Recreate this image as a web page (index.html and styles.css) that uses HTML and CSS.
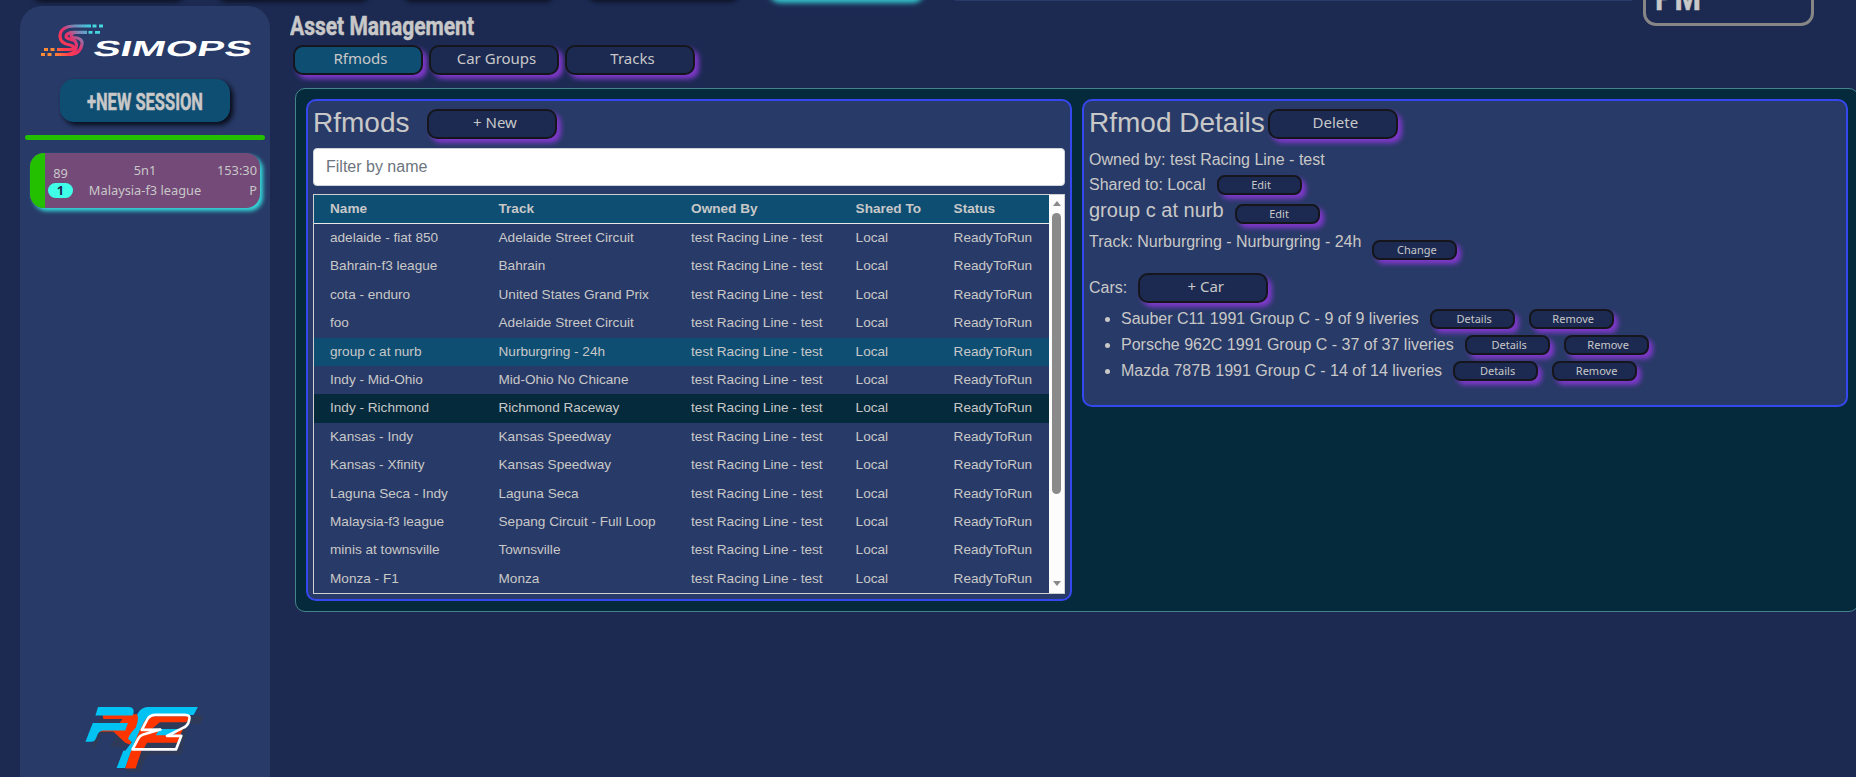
FILE: index.html
```
<!DOCTYPE html>
<html lang="en">
<head>
    <meta charset="UTF-8">
    <meta name="viewport" content="width=device-width, initial-scale=1.0">
    <title>SimOps - Asset Management</title>
    <link rel="stylesheet" href="styles.css">
</head>
<body>

    <!-- Top navigation, scrolled almost out of view -->
    <header class="topbar">
        <nav class="topnav">
            <span class="topnav-item"></span>
            <span class="topnav-item"></span>
            <span class="topnav-item"></span>
            <span class="topnav-item"></span>
            <span class="topnav-item active"></span>
        </nav>
        <div class="topline"></div>
        <div class="clock">
            <svg width="60" height="38" viewBox="0 0 60 38"><text class="condensed" x="0" y="27" font-size="38" textLength="46" lengthAdjust="spacingAndGlyphs">PM</text></svg>
        </div>
    </header>

    <div class="page">
        <!-- Sidebar -->
        <aside class="sidebar">
            <svg class="logo" width="222" height="42" viewBox="0 0 222 42">
                <defs>
                    <linearGradient id="simopsGrad" x1="50" y1="2" x2="14" y2="32" gradientUnits="userSpaceOnUse">
                        <stop offset="0" stop-color="#35d4e0"/>
                        <stop offset="0.28" stop-color="#7a86b8"/>
                        <stop offset="0.5" stop-color="#e8306c"/>
                        <stop offset="0.75" stop-color="#ff3b4e"/>
                        <stop offset="1" stop-color="#ff8a35"/>
                    </linearGradient>
                </defs>
                <g fill="none" stroke="url(#simopsGrad)" stroke-width="3.200">
                    <path d="M51 3H35C25 3 20 7 20 13C20 19 24 21 30 22C35 23 34 26.500 30 26.500H17"/>
                    <path d="M47 9.300H35C29 9.300 26 11 26 13.500C26 16.500 32 15.500 35 18C38 22 36 31.500 27 31.500H15"/>
                    <path d="M35 9.300C30 10 30 14 34 14.500C40 15 42.500 17 42 21C41 27 37 31.500 29 31.500"/>
                </g>
                <g stroke="#45d5df" stroke-width="2.800">
                    <path d="M52.500 3h4M59 3h4M48.500 9.300h4M55 9.300h5M61 1.500"/>
                </g>
                <g stroke="#ff8a35" stroke-width="2.800">
                    <path d="M4 26.500h4M10.500 26.500h4M1 31.500h4M7.500 31.500h4"/>
                </g>
                <text class="wordmark" transform="translate(52 33) skewX(-14)" x="0" y="0" font-size="22" textLength="158" lengthAdjust="spacingAndGlyphs">SIMOPS</text>
            </svg>

            <button class="new-session">
                <svg width="120" height="36" viewBox="0 0 120 36"><text class="condensed" x="1" y="24" font-size="24" textLength="116" lengthAdjust="spacingAndGlyphs">+NEW SESSION</text></svg>
            </button>

            <div class="divider"></div>

            <div class="session">
                <div class="session-state"></div>
                <div class="session-count">
                    <span>89</span>
                    <span class="pill">1</span>
                </div>
                <div class="session-name">
                    <span>5n1</span>
                    <span>Malaysia-f3 league</span>
                </div>
                <div class="session-time">
                    <span>153:30</span>
                    <span>P</span>
                </div>
            </div>

            <svg class="rf2" width="123" height="68" viewBox="60 75 370 205">
                <g fill="#2f3a58">
                    <path d="M120 110H225L200 205H150L175 165H125L105 208H95Z"/>
                    <path d="M240 110H436L420 135H385L365 228H262L240 285H195Z"/>
                </g>
                <path fill="#ff3500" d="M128 106H232L236 112L212 198L196 192L160 158H118L124 146H168L188 120H130Z"/>
                <path fill="#ff3500" d="M236 112L258 130L274 112H392L380 130H300L276 150H370L352 192H262L250 212H244L227 269H197L222 190L205 178Z"/>
                <path fill="#00c3f3" d="M114 84H208Q224 86 221 102L218 110H106Z"/>
                <path fill="#00c3f3" d="M98 132H204L196 155H128Q118 156 114 164L106 182Q103 189 94 189H76Z"/>
                <path fill="#00c3f3" d="M262 84H415L402 108H280Q262 110 254 126L238 158L214 216L196 268H170L190 216H196L216 190L204 180Q212 160 228 146Q238 120 232 106Q242 86 262 84Z"/>
                <path fill="#ff3500" d="M214 216H245L227 269H196Z"/>
                <path fill="#00c3f3" d="M300 150H364L340 169H288Z"/>
                <path fill="none" stroke="#fff" stroke-width="8" stroke-linejoin="round" d="M246 153L262 122Q270 108 288 108H376Q394 108 389 122L386 132Q382 142 370 147L322 171H365L349 212H218L236 178Q240 170 250 167L302 152Z"/>
            </svg>
        </aside>

        <!-- Content -->
        <main class="content">
            <h1 class="page-title">
                <svg width="190" height="34" viewBox="0 0 190 34"><text class="condensed" x="0" y="25" font-size="26" textLength="184" lengthAdjust="spacingAndGlyphs">Asset Management</text></svg>
            </h1>

            <div class="tabs">
                <button class="btn active">Rfmods</button>
                <button class="btn">Car Groups</button>
                <button class="btn">Tracks</button>
            </div>

            <div class="assets">
                <section class="panel panel-list">
                    <div class="panel-head">
                        <h2>Rfmods</h2>
                        <button class="btn">+ New</button>
                    </div>
                    <input class="filter" type="text" placeholder="Filter by name">

                    <div class="table-wrap">
                        <table>
                            <colgroup>
                                <col class="col-name">
                                <col class="col-track">
                                <col class="col-owner">
                                <col class="col-shared">
                                <col class="col-status">
                            </colgroup>
                            <thead>
                                <tr><th>Name</th><th>Track</th><th>Owned By</th><th>Shared To</th><th>Status</th></tr>
                            </thead>
                            <tbody>
                                <tr><td>adelaide - fiat 850</td><td>Adelaide Street Circuit</td><td>test Racing Line - test</td><td>Local</td><td>ReadyToRun</td></tr>
                                <tr><td>Bahrain-f3 league</td><td>Bahrain</td><td>test Racing Line - test</td><td>Local</td><td>ReadyToRun</td></tr>
                                <tr><td>cota - enduro</td><td>United States Grand Prix</td><td>test Racing Line - test</td><td>Local</td><td>ReadyToRun</td></tr>
                                <tr><td>foo</td><td>Adelaide Street Circuit</td><td>test Racing Line - test</td><td>Local</td><td>ReadyToRun</td></tr>
                                <tr class="selected"><td>group c at nurb</td><td>Nurburgring - 24h</td><td>test Racing Line - test</td><td>Local</td><td>ReadyToRun</td></tr>
                                <tr><td>Indy - Mid-Ohio</td><td>Mid-Ohio No Chicane</td><td>test Racing Line - test</td><td>Local</td><td>ReadyToRun</td></tr>
                                <tr class="hover"><td>Indy - Richmond</td><td>Richmond Raceway</td><td>test Racing Line - test</td><td>Local</td><td>ReadyToRun</td></tr>
                                <tr><td>Kansas - Indy</td><td>Kansas Speedway</td><td>test Racing Line - test</td><td>Local</td><td>ReadyToRun</td></tr>
                                <tr><td>Kansas - Xfinity</td><td>Kansas Speedway</td><td>test Racing Line - test</td><td>Local</td><td>ReadyToRun</td></tr>
                                <tr><td>Laguna Seca - Indy</td><td>Laguna Seca</td><td>test Racing Line - test</td><td>Local</td><td>ReadyToRun</td></tr>
                                <tr><td>Malaysia-f3 league</td><td>Sepang Circuit - Full Loop</td><td>test Racing Line - test</td><td>Local</td><td>ReadyToRun</td></tr>
                                <tr><td>minis at townsville</td><td>Townsville</td><td>test Racing Line - test</td><td>Local</td><td>ReadyToRun</td></tr>
                                <tr><td>Monza - F1</td><td>Monza</td><td>test Racing Line - test</td><td>Local</td><td>ReadyToRun</td></tr>
                            </tbody>
                        </table>
                        <div class="scrollbar">
                            <span class="arrow-up"></span>
                            <span class="thumb"></span>
                            <span class="arrow-down"></span>
                        </div>
                    </div>
                </section>

                <section class="panel panel-details">
                    <div class="panel-head">
                        <h2>Rfmod Details</h2>
                        <button class="btn">Delete</button>
                    </div>
                    <div class="line owner">Owned by: test Racing Line - test</div>
                    <div class="line shared">Shared to: Local <button class="btn btn-sm">Edit</button></div>
                    <div class="line name"><span>group c at nurb</span> <button class="btn btn-sm">Edit</button></div>
                    <div class="line track">Track: Nurburgring - Nurburgring - 24h <button class="btn btn-sm">Change</button></div>
                    <div class="line cars">Cars: <button class="btn">+ Car</button></div>
                    <ul class="car-list">
                        <li><span>Sauber C11 1991 Group C - 9 of 9 liveries</span><button class="btn btn-sm">Details</button><button class="btn btn-sm">Remove</button></li>
                        <li><span>Porsche 962C 1991 Group C - 37 of 37 liveries</span><button class="btn btn-sm">Details</button><button class="btn btn-sm">Remove</button></li>
                        <li><span>Mazda 787B 1991 Group C - 14 of 14 liveries</span><button class="btn btn-sm">Details</button><button class="btn btn-sm">Remove</button></li>
                    </ul>
                </section>
            </div>
        </main>
    </div>

</body>
</html>
```
FILE: styles.css
```
* {
    margin: 0;
    padding: 0;
    box-sizing: border-box;
}

body {
    height: 777px;
    overflow: hidden;
    background: #1c2a52;
    color: #c8c8c8;
    font-family: "Liberation Sans", Arial, sans-serif;
    font-size: 16px;
    line-height: 24px;
}

button {
    font-family: "Noto Sans", "Open Sans", sans-serif;
    color: #c8c8c8;
}

.condensed {
    font-family: Roboto, sans-serif;
    font-weight: 700;
    fill: #c8c8c8;
    stroke: #c8c8c8;
    stroke-width: 0.5px;
}

/* top bar */
.topbar {
    display: flex;
    height: 40px;
    margin-top: -40px;
    padding-left: 28px;
}

.topnav {
    display: flex;
    gap: 30px;
    height: 39px;
}

.topnav-item {
    width: 155px;
    border-radius: 12px;
    background: #1c2a52;
    box-shadow: 3px 3px 5px #0c1020;
}

.topnav-item.active {
    background: #0f4e73;
    box-shadow: 1px 3px 5px 1px #35c5cc;
}

.topline {
    width: 677px;
    height: 41px;
    margin-left: 32px;
    border-bottom: 1px solid #283a67;
}

.clock {
    width: 171px;
    height: 66px;
    margin-left: 11px;
    padding: 20px 0 0 9px;
    border: 3px solid #868686;
    border-radius: 13px;
}

.clock svg {
    display: block;
}

.page {
    display: flex;
    gap: 20px;
    height: 777px;
    padding-left: 20px;
}

/* sidebar */
.sidebar {
    display: flex;
    flex-direction: column;
    flex: none;
    width: 250px;
    height: 800px;
    margin-top: 6px;
    padding: 17px 5px 0;
    border-radius: 22px;
    background: #283a67;
}

.logo {
    flex: none;
    margin-left: 15px;
}

.wordmark {
    font-family: "Liberation Sans", Arial, sans-serif;
    font-weight: 700;
    fill: #fff;
}

.new-session {
    flex: none;
    width: 170px;
    height: 43px;
    margin: 14px 0 13px 35px;
    border: none;
    border-radius: 14px;
    background: #0f4e73;
    box-shadow: 3px 3px 5px #080c18;
}

.new-session svg {
    display: block;
    margin: 6px 0 0 26px;
}

.divider {
    height: 5px;
    border-radius: 3px;
    background: #23c000;
}

.session {
    display: flex;
    flex: none;
    width: 230px;
    height: 55px;
    margin: 13px 0 0 5px;
    overflow: hidden;
    border-radius: 14px;
    background: #744a78;
    box-shadow: 3px 3px 4px #35dbdc;
    font-family: "Noto Sans", "Open Sans", sans-serif;
    font-size: 12.8px;
    line-height: 20px;
}

.session-state {
    width: 15px;
    background: #23c000;
}

.session-count,
.session-name,
.session-time {
    display: flex;
    flex-direction: column;
    align-items: center;
}

.session-count {
    width: 31px;
    padding-top: 10px;
}

.pill {
    width: 25px;
    height: 15px;
    border-radius: 8px;
    background: #40ffe8;
    color: #1c2a52;
    font-weight: 700;
    line-height: 15px;
    text-align: center;
}

.session-name {
    flex: 1;
    padding: 7px 0 0 2px;
}

.session-time {
    align-items: flex-end;
    width: 48px;
    padding: 7px 3px 0 0;
}

.rf2 {
    flex: none;
    margin: 496px 0 0 55px;
}

/* content */
.content {
    flex: none;
    width: 1570px;
}

.page-title {
    height: 42px;
    padding-top: 10px;
    line-height: 0;
}

.btn {
    flex: none;
    width: 130px;
    height: 30px;
    padding: 0 0 4px 5px;
    border: 2px solid #14161c;
    border-radius: 10px;
    background: #1c2a52;
    box-shadow: 4px 4px 5px #8038cc;
    font-size: 15px;
    line-height: 20px;
}

.btn.active {
    background: #0f4e73;
}

.btn-sm {
    width: 85px;
    height: 20px;
    padding: 0 0 0 4px;
    border-radius: 8px;
    font-size: 11px;
    line-height: 14px;
}

.tabs {
    display: flex;
    gap: 6px;
    padding: 3px 0 13px 3px;
}

.assets {
    display: flex;
    align-items: flex-start;
    gap: 10px;
    width: 1564px;
    height: 524px;
    margin-left: 5px;
    padding: 10px;
    border: 1px solid #44838c;
    border-radius: 10px;
    background: #052a3c;
}

.panel {
    width: 766px;
    border: 2px solid #3548f0;
    border-radius: 10px;
    background: #283a67;
}

.panel-list {
    height: 502px;
    padding: 8px 5px 0;
}

.panel-details {
    height: 308px;
    padding: 8px 5px 0;
}

.panel-head {
    display: flex;
    gap: 18px;
    height: 30px;
}

.panel-details .panel-head {
    gap: 3px;
}

.panel-head h2 {
    font-size: 28px;
    font-weight: 400;
    line-height: 28px;
}

.filter {
    display: block;
    width: 752px;
    height: 38px;
    margin-top: 9px;
    padding: 0 12px 1px;
    border: 1px solid #ced4da;
    border-radius: 4px;
    background: #fff;
    font-family: "Liberation Sans", Arial, sans-serif;
    font-size: 16px;
}

.filter::placeholder {
    color: #6c757d;
}

.table-wrap {
    display: flex;
    width: 752px;
    height: 400px;
    margin-top: 7.6px;
    border: 1px solid #d0d0d0;
    overflow: hidden;
}

table {
    width: 735px;
    border-collapse: separate;
    border-spacing: 0;
    table-layout: fixed;
    font-size: 13.6px;
    line-height: 20.4px;
}

.col-name { width: 168.5px; }
.col-track { width: 192.6px; }
.col-owner { width: 164.5px; }
.col-shared { width: 98px; }
.col-status { width: 111.4px; }

th, td {
    padding: 4px 0 4px 16px;
    text-align: left;
    white-space: nowrap;
}

th {
    border-bottom: 1px solid #e8e8e8;
    background: #0f4e73;
}

.selected {
    background: #0f4e73;
}

.hover {
    background: #052a3c;
}

.scrollbar {
    display: flex;
    flex-direction: column;
    align-items: center;
    width: 15px;
    height: 398px;
    padding: 6px 0 7px;
    background: #fcfcfc;
}

.arrow-up,
.arrow-down {
    width: 0;
    border: 4.5px solid transparent;
}

.arrow-up {
    border-top: none;
    border-bottom: 5px solid #8a8a8a;
}

.arrow-down {
    margin-top: auto;
    border-bottom: none;
    border-top: 5px solid #8a8a8a;
}

.thumb {
    width: 9px;
    height: 281px;
    margin-top: 7px;
    border-radius: 5px;
    background: #8a8a8a;
}

/* details */
.line {
    display: flex;
    align-items: flex-start;
    gap: 11px;
    line-height: 20px;
}

.owner {
    height: 25px;
    margin-top: 11px;
}

.shared {
    height: 26px;
}

.name {
    height: 31px;
    font-size: 20px;
    line-height: 18px;
}

.name .btn {
    margin-top: 3px;
}

.track {
    height: 41px;
}

.track .btn {
    margin-top: 8px;
}

.cars {
    height: 30px;
    line-height: 30px;
}

.car-list {
    padding: 3px 0 0 32px;
}

.car-list li {
    height: 26px;
    line-height: 26px;
}

.car-list .btn {
    margin-left: 11px;
    vertical-align: 1px;
}

.car-list .btn + .btn {
    margin-left: 14px;
}
```
